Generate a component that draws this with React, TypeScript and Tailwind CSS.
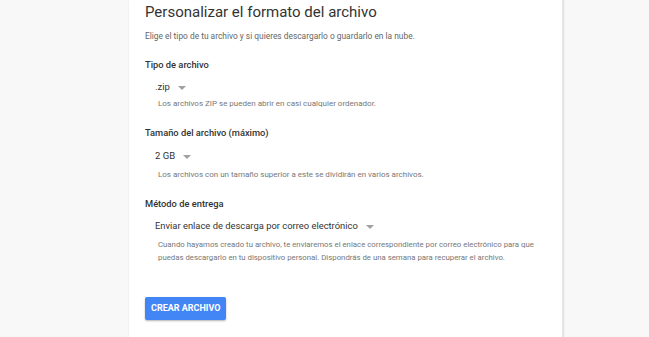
import React from "react";

function Caret() {
  return (
    <svg width="8" height="4" viewBox="0 0 8 4" className="ml-[8px] mt-[1px]">
      <path d="M0 0 L4 4 L8 0 Z" fill="#a0a0a0" />
    </svg>
  );
}

export default function App() {
  return (
    <div
      className="w-[649px] h-[337px] bg-[#f8f8f8] flex overflow-hidden"
      style={{ fontFamily: "Roboto, 'Liberation Sans', sans-serif" }}
    >
      <div className="ml-[129px] w-[435px] h-full bg-white border-r-[2px] border-[#e6e6e6] shadow-[0_0_2px_rgba(0,0,0,0.08)] pl-[16px] pt-[2px]">
        <h1 className="text-[15px] leading-[20px] text-[#333]">Personalizar el formato del archivo</h1>
        <p className="mt-[8px] text-[8.4px] leading-[12px] text-[#666]">
          Elige el tipo de tu archivo y si quieres descargarlo o guardarlo en la nube.
        </p>

        <div className="mt-[17px] text-[9.3px] leading-[12px] font-medium text-[#333]">Tipo de archivo</div>
        <div className="mt-[10px] ml-[10px] flex items-center text-[9.5px] leading-[12px] text-[#333]">
          .zip
          <Caret />
        </div>
        <p className="mt-[5px] ml-[13px] text-[8px] leading-[12px] text-[#777]">
          Los archivos ZIP se pueden abrir en casi cualquier ordenador.
        </p>

        <div className="mt-[17px] text-[9.3px] leading-[12px] font-medium text-[#333]">Tamaño del archivo (máximo)</div>
        <div className="mt-[11px] ml-[10px] flex items-center text-[9.5px] leading-[12px] text-[#333]">
          2 GB
          <Caret />
        </div>
        <p className="mt-[7px] ml-[13px] text-[8px] leading-[12px] text-[#777]">
          Los archivos con un tamaño superior a este se dividirán en varios archivos.
        </p>

        <div className="mt-[17px] text-[9.3px] leading-[12px] font-medium text-[#333]">Método de entrega</div>
        <div className="mt-[10px] ml-[10px] flex items-center text-[9.4px] leading-[12px] text-[#333]">
          Enviar enlace de descarga por correo electrónico
          <Caret />
        </div>
        <p className="mt-[6px] ml-[13px] text-[7.8px] leading-[13px] text-[#777] whitespace-nowrap">
          Cuando hayamos creado tu archivo, te enviaremos el enlace correspondiente por correo electrónico para que
          <br />
          puedas descargarlo en tu dispositivo personal. Dispondrás de una semana para recuperar el archivo.
        </p>

        <button className="mt-[33px] h-[23px] px-[6px] rounded-[2px] bg-[#4285f4] text-white text-[9px] font-bold shadow-[0_1px_2px_rgba(0,0,0,0.3)]">
          CREAR ARCHIVO
        </button>
      </div>
    </div>
  );
}
